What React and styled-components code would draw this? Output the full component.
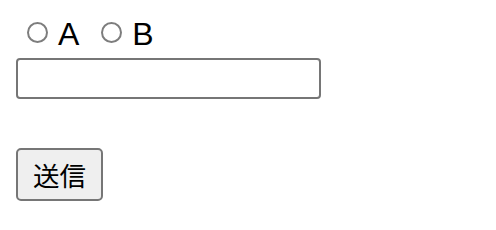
import { useState } from "react";
import styled, { createGlobalStyle } from "styled-components";

const GlobalStyle = createGlobalStyle`
  html, body {
    margin: 0;
    padding: 0;
    background: #fff;
  }
  body {
    font-family: "Liberation Sans", Arial, "Noto Sans CJK JP", sans-serif;
    color: #000;
  }
`;

const Form = styled.form`
  display: flex;
  flex-direction: column;
  align-items: flex-start;
  padding: 16px;
`;

const RadioRow = styled.div`
  display: flex;
  align-items: flex-start;
  height: 37px;
  padding-left: 11px;
`;

const Choice = styled.label`
  display: flex;
  align-items: flex-start;
  font-size: 32px;
  line-height: 37px;
  margin-right: 22px;
  cursor: pointer;
`;

const Radio = styled.input`
  appearance: none;
  -webkit-appearance: none;
  flex: none;
  box-sizing: border-box;
  display: block;
  width: 21px;
  min-width: 21px;
  height: 21px;
  padding: 0;
  margin: 6px 10px 0 0;
  border: 2px solid #7d7d7d;
  border-radius: 50%;
  background: #fff;
  &:checked {
    background: radial-gradient(circle, #1a73e8 0 45%, #fff 50%);
    border-color: #1a73e8;
  }
`;

const TextBox = styled.input`
  box-sizing: border-box;
  width: 305px;
  height: 41px;
  margin-top: 5px;
  padding: 2px 6px;
  border: 2px solid #767676;
  border-radius: 4px;
  font-size: 26px;
  font-family: "Liberation Sans", Arial, sans-serif;
  outline: none;
`;

const SubmitButton = styled.button`
  box-sizing: border-box;
  height: 53px;
  margin-top: 49px;
  padding: 0 15px;
  border: 2px solid #767676;
  border-radius: 5px;
  background: #efefef;
  font-family: "Noto Sans CJK JP", "Liberation Sans", sans-serif;
  font-size: 26.5px;
  color: #000;
  cursor: pointer;
`;

export default function App() {
  const [choice, setChoice] = useState("");
  const [text, setText] = useState("");

  return (
    <>
      <GlobalStyle />
      <Form onSubmit={(e) => e.preventDefault()}>
        <RadioRow>
          {["A", "B"].map((v) => (
            <Choice key={v}>
              <Radio
                type="radio"
                name="choice"
                value={v}
                checked={choice === v}
                onChange={() => setChoice(v)}
              />
              {v}
            </Choice>
          ))}
        </RadioRow>
        <TextBox type="text" value={text} onChange={(e) => setText(e.target.value)} />
        <SubmitButton type="submit">送信</SubmitButton>
      </Form>
    </>
  );
}
